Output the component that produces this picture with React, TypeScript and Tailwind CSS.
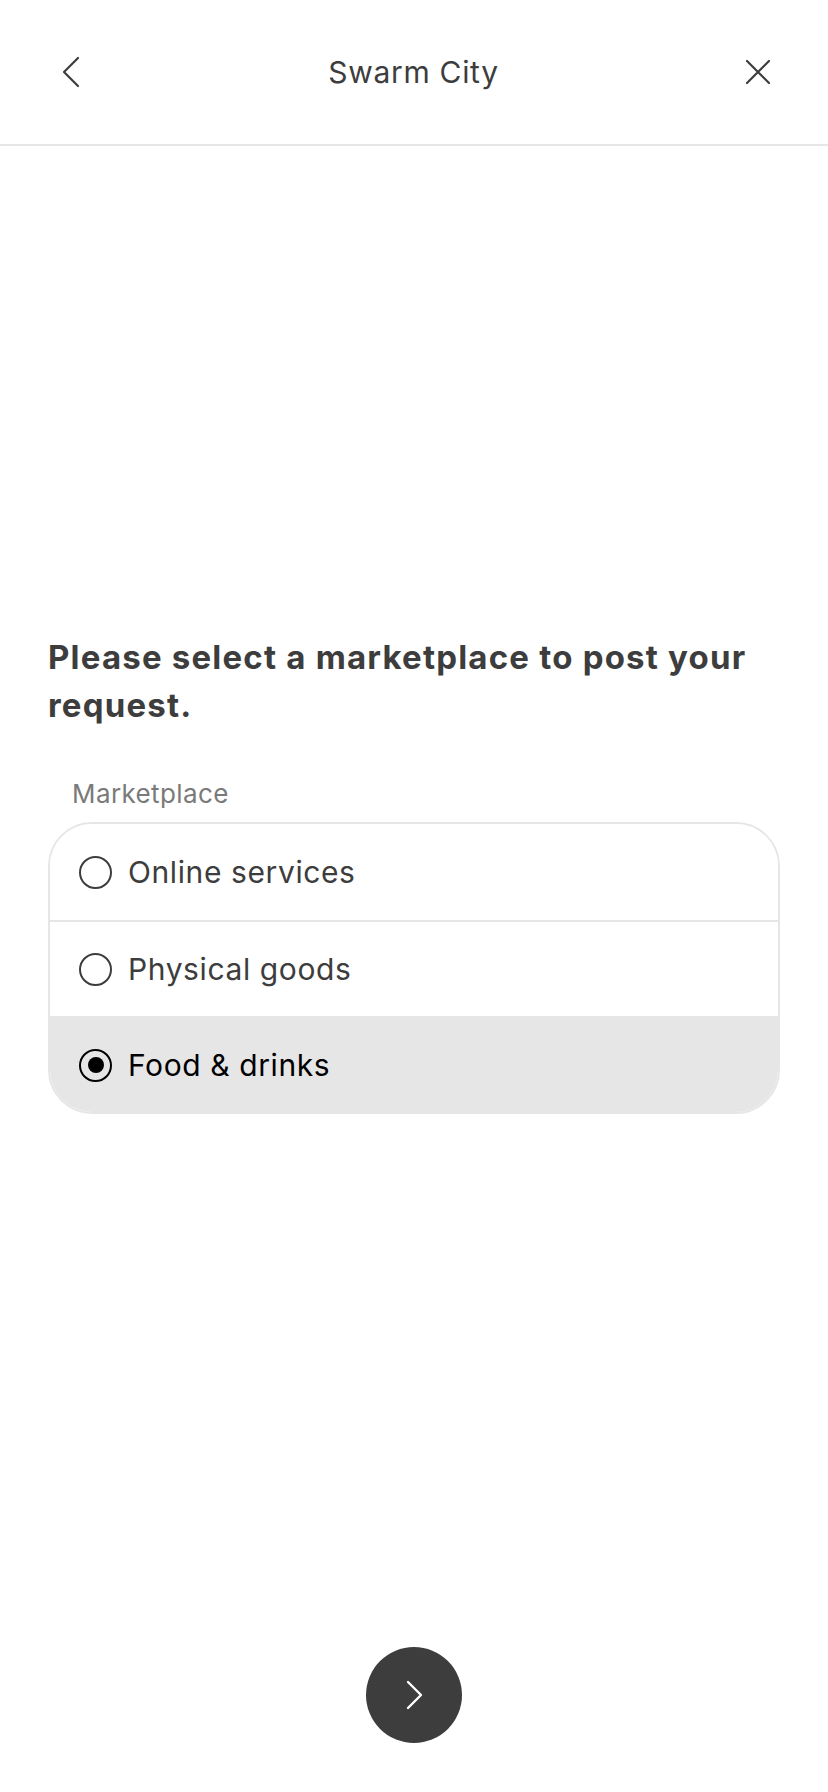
import { useState } from 'react';

const options = ['Online services', 'Physical goods', 'Food & drinks'];

export default function App() {
  const [selected, setSelected] = useState(2);

  return (
    <div
      className="min-h-screen h-[1792px] flex flex-col bg-white text-[#3d3d3d]"
      style={{ fontFamily: 'Inter, "Noto Sans", sans-serif' }}
    >
      {/* Header */}
      <div className="h-[146px] shrink-0 border-b-2 border-[#e6e6e6] flex items-center pl-[62px] pr-[57px]">
        <button className="w-[34px] h-[34px] flex items-center justify-start">
          <svg width="18" height="32" viewBox="0 0 18 32" fill="none" stroke="#3d3d3d" strokeWidth="2.2" strokeLinecap="round" strokeLinejoin="round">
            <path d="M16 2 L2 16 L16 30" />
          </svg>
        </button>
        <div className="flex-1 text-center text-[30px] leading-none tracking-[0.7px]">Swarm City</div>
        <button className="w-[40px] h-[34px] flex items-center justify-end">
          <svg width="26" height="26" viewBox="0 0 26 26" fill="none" stroke="#3d3d3d" strokeWidth="2.2" strokeLinecap="round">
            <path d="M2 2 L24 24 M24 2 L2 24" />
          </svg>
        </button>
      </div>

      {/* Main */}
      <div className="flex-1 flex flex-col px-[48px] pt-[487px]">
        <h1 className="text-[33px] leading-[48px] font-bold tracking-[1.2px] text-[#3d3d3d]">
          Please select a marketplace to post your request.
        </h1>
        <div className="mt-[49px] pl-[24px] text-[26px] leading-[32px] tracking-[0.4px] text-[#7a7a7a]">Marketplace</div>
        <div className="mt-[12px] border-2 border-[#e6e6e6] rounded-[44px] overflow-hidden">
          {options.map((opt, i) => {
            const active = i === selected;
            return (
              <button
                key={opt}
                onClick={() => setSelected(i)}
                className={`w-full h-[96px] flex items-center gap-4 pl-[29px] text-left ${
                  i > 0 ? 'border-t-2 border-[#e6e6e6]' : ''
                } ${active ? 'bg-[#e6e6e6] text-black' : 'bg-white text-[#3d3d3d]'}`}
              >
                <span className={`w-[33px] h-[33px] rounded-full border-2 flex items-center justify-center ${active ? 'border-black' : 'border-[#3d3d3d]'}`}>
                  {active && <span className="w-[16px] h-[16px] rounded-full bg-black" />}
                </span>
                <span className="text-[30px] leading-none tracking-[0.6px]">{opt}</span>
              </button>
            );
          })}
        </div>

        <div className="flex-1" />

        <div className="flex justify-center mb-[49px]">
          <button className="w-[96px] h-[96px] rounded-full bg-[#3d3d3d] flex items-center justify-center">
            <svg width="20" height="32" viewBox="0 0 20 32" fill="none" stroke="#ffffff" strokeWidth="2.4" strokeLinecap="round" strokeLinejoin="round">
              <path d="M4 3 L17 16 L4 29" />
            </svg>
          </button>
        </div>
      </div>
    </div>
  );
}
